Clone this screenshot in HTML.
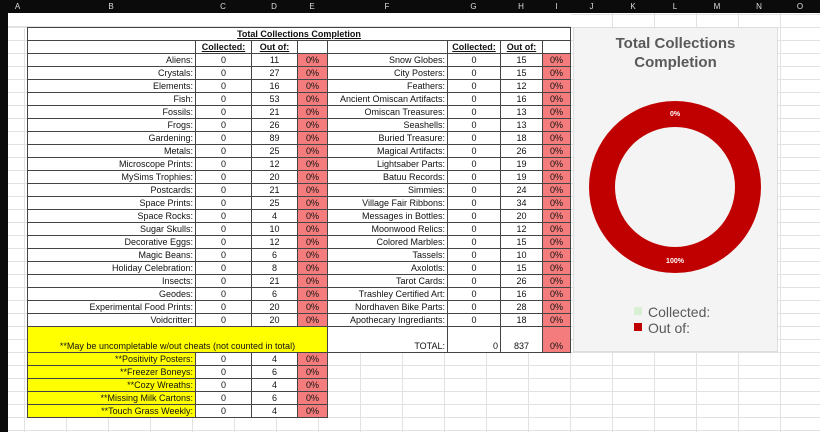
<!DOCTYPE html>
<html><head><meta charset="utf-8"><style>
*{margin:0;padding:0;box-sizing:border-box}
body{width:820px;height:432px;overflow:hidden;background:#fff;font-family:"Liberation Sans",sans-serif;font-size:9px;color:#111;position:relative;
background-image:linear-gradient(to right,#e2e2e2 1px,transparent 1px),linear-gradient(to bottom,#e2e2e2 1px,transparent 1px);
background-size:42px 13px;background-position:570px 0,0 14px}
.hdr{position:absolute;left:0;top:0;width:820px;height:13px;background:#0b0b0b;color:#ddd;font-size:8px}
.hdr span{position:absolute;top:2px;text-align:center}
.rn{position:absolute;left:0;top:13px;width:8px;height:419px;background:#0b0b0b}
.g{position:absolute;display:grid;background:#444;padding:1px;gap:1px}
.g>div{background:#fff;display:flex;align-items:center;justify-content:center;padding:0 2px;white-space:nowrap;overflow:hidden;line-height:10px}
.g>div.r{justify-content:flex-end}
.g>div.p{background:#f47c7c}
.g>div.y{background:#ffff00}
.g>div.b{align-items:flex-end;padding-bottom:1px}
.t{grid-column:1/9}
u{font-weight:bold}
.main{left:27px;top:27px;width:544px;grid-template-columns:167px 55px 45px 29px 119px 52px 41px 27px;grid-template-rows:repeat(23,12px)}
.tot{left:27px;top:326px;width:544px;grid-template-columns:167px 55px 45px 29px 119px 52px 41px 27px;grid-template-rows:25px}
.ext{left:27px;top:352px;width:301px;grid-template-columns:167px 55px 45px 29px;grid-template-rows:repeat(5,12px)}
.chart{position:absolute;left:573px;top:27px;width:205px;height:325px;background:#f4f4f4;border:1px solid #ddd}
</style></head><body>
<div class="hdr">
<span style="left:8px;width:19px">A</span><span style="left:27px;width:168px">B</span><span style="left:195px;width:56px">C</span><span style="left:251px;width:46px">D</span><span style="left:297px;width:30px">E</span><span style="left:327px;width:120px">F</span><span style="left:447px;width:53px">G</span><span style="left:500px;width:42px">H</span><span style="left:542px;width:29px">I</span><span style="left:571px;width:41px">J</span><span style="left:612px;width:42px">K</span><span style="left:654px;width:42px">L</span><span style="left:696px;width:42px">M</span><span style="left:738px;width:42px">N</span><span style="left:780px;width:40px">O</span>
</div>
<div class="rn"></div>
<div style="position:absolute;left:8px;top:13px;width:563px;height:14px;background:#fff;border-bottom:1px solid #e2e2e2"></div>
<div class="g main">
<div class="t"><u>Total Collections Completion</u></div>
<div></div><div><u>Collected:</u></div><div><u>Out of:</u></div><div></div><div></div><div><u>Collected:</u></div><div><u>Out of:</u></div><div></div>
<div class="r">Aliens:</div><div>0</div><div>11</div><div class="p">0%</div><div class="r">Snow Globes:</div><div>0</div><div>15</div><div class="p">0%</div>
<div class="r">Crystals:</div><div>0</div><div>27</div><div class="p">0%</div><div class="r">City Posters:</div><div>0</div><div>15</div><div class="p">0%</div>
<div class="r">Elements:</div><div>0</div><div>16</div><div class="p">0%</div><div class="r">Feathers:</div><div>0</div><div>12</div><div class="p">0%</div>
<div class="r">Fish:</div><div>0</div><div>53</div><div class="p">0%</div><div class="r">Ancient Omiscan Artifacts:</div><div>0</div><div>16</div><div class="p">0%</div>
<div class="r">Fossils:</div><div>0</div><div>21</div><div class="p">0%</div><div class="r">Omiscan Treasures:</div><div>0</div><div>13</div><div class="p">0%</div>
<div class="r">Frogs:</div><div>0</div><div>26</div><div class="p">0%</div><div class="r">Seashells:</div><div>0</div><div>13</div><div class="p">0%</div>
<div class="r">Gardening:</div><div>0</div><div>89</div><div class="p">0%</div><div class="r">Buried Treasure:</div><div>0</div><div>18</div><div class="p">0%</div>
<div class="r">Metals:</div><div>0</div><div>25</div><div class="p">0%</div><div class="r">Magical Artifacts:</div><div>0</div><div>26</div><div class="p">0%</div>
<div class="r">Microscope Prints:</div><div>0</div><div>12</div><div class="p">0%</div><div class="r">Lightsaber Parts:</div><div>0</div><div>19</div><div class="p">0%</div>
<div class="r">MySims Trophies:</div><div>0</div><div>20</div><div class="p">0%</div><div class="r">Batuu Records:</div><div>0</div><div>19</div><div class="p">0%</div>
<div class="r">Postcards:</div><div>0</div><div>21</div><div class="p">0%</div><div class="r">Simmies:</div><div>0</div><div>24</div><div class="p">0%</div>
<div class="r">Space Prints:</div><div>0</div><div>25</div><div class="p">0%</div><div class="r">Village Fair Ribbons:</div><div>0</div><div>34</div><div class="p">0%</div>
<div class="r">Space Rocks:</div><div>0</div><div>4</div><div class="p">0%</div><div class="r">Messages in Bottles:</div><div>0</div><div>20</div><div class="p">0%</div>
<div class="r">Sugar Skulls:</div><div>0</div><div>10</div><div class="p">0%</div><div class="r">Moonwood Relics:</div><div>0</div><div>12</div><div class="p">0%</div>
<div class="r">Decorative Eggs:</div><div>0</div><div>12</div><div class="p">0%</div><div class="r">Colored Marbles:</div><div>0</div><div>15</div><div class="p">0%</div>
<div class="r">Magic Beans:</div><div>0</div><div>6</div><div class="p">0%</div><div class="r">Tassels:</div><div>0</div><div>10</div><div class="p">0%</div>
<div class="r">Holiday Celebration:</div><div>0</div><div>8</div><div class="p">0%</div><div class="r">Axolotls:</div><div>0</div><div>15</div><div class="p">0%</div>
<div class="r">Insects:</div><div>0</div><div>21</div><div class="p">0%</div><div class="r">Tarot Cards:</div><div>0</div><div>26</div><div class="p">0%</div>
<div class="r">Geodes:</div><div>0</div><div>6</div><div class="p">0%</div><div class="r">Trashley Certified Art:</div><div>0</div><div>16</div><div class="p">0%</div>
<div class="r">Experimental Food Prints:</div><div>0</div><div>20</div><div class="p">0%</div><div class="r">Nordhaven Bike Parts:</div><div>0</div><div>28</div><div class="p">0%</div>
<div class="r">Voidcritter:</div><div>0</div><div>20</div><div class="p">0%</div><div class="r">Apothecary Ingrediants:</div><div>0</div><div>18</div><div class="p">0%</div>
</div>
<div class="g tot">
<div class="y b" style="grid-column:1/5">**May be uncompletable w/out cheats (not counted in total)</div>
<div class="r b">TOTAL:</div><div class="r b">0</div><div class="b">837</div><div class="p b">0%</div>
</div>
<div class="g ext">
<div class="r y">**Positivity Posters:</div><div>0</div><div>4</div><div class="p">0%</div>
<div class="r y">**Freezer Boneys:</div><div>0</div><div>6</div><div class="p">0%</div>
<div class="r y">**Cozy Wreaths:</div><div>0</div><div>4</div><div class="p">0%</div>
<div class="r y">**Missing Milk Cartons:</div><div>0</div><div>6</div><div class="p">0%</div>
<div class="r y">**Touch Grass Weekly:</div><div>0</div><div>4</div><div class="p">0%</div>
</div>
<div class="chart">
<div style="position:absolute;left:0;top:6px;width:203px;text-align:center;font-weight:bold;font-size:15px;line-height:19px;color:#595959">Total Collections<br>Completion</div>
<svg style="position:absolute;left:0;top:0" width="205" height="325">
<circle cx="101" cy="159" r="73" fill="none" stroke="#c00000" stroke-width="26"/>
<text x="101" y="88" font-size="7" fill="#fff" text-anchor="middle" font-weight="bold" font-family="Liberation Sans">0%</text>
<text x="101" y="235" font-size="7" fill="#fff" text-anchor="middle" font-weight="bold" font-family="Liberation Sans">100%</text>
<rect x="60" y="279" width="8" height="8" fill="#d9f0d3"/>
<rect x="60" y="295" width="8" height="8" fill="#c00000"/>
<text x="74" y="289" font-size="14" fill="#595959" font-family="Liberation Sans">Collected:</text>
<text x="74" y="305" font-size="14" fill="#595959" font-family="Liberation Sans">Out of:</text>
</svg>
</div>
</body></html>
